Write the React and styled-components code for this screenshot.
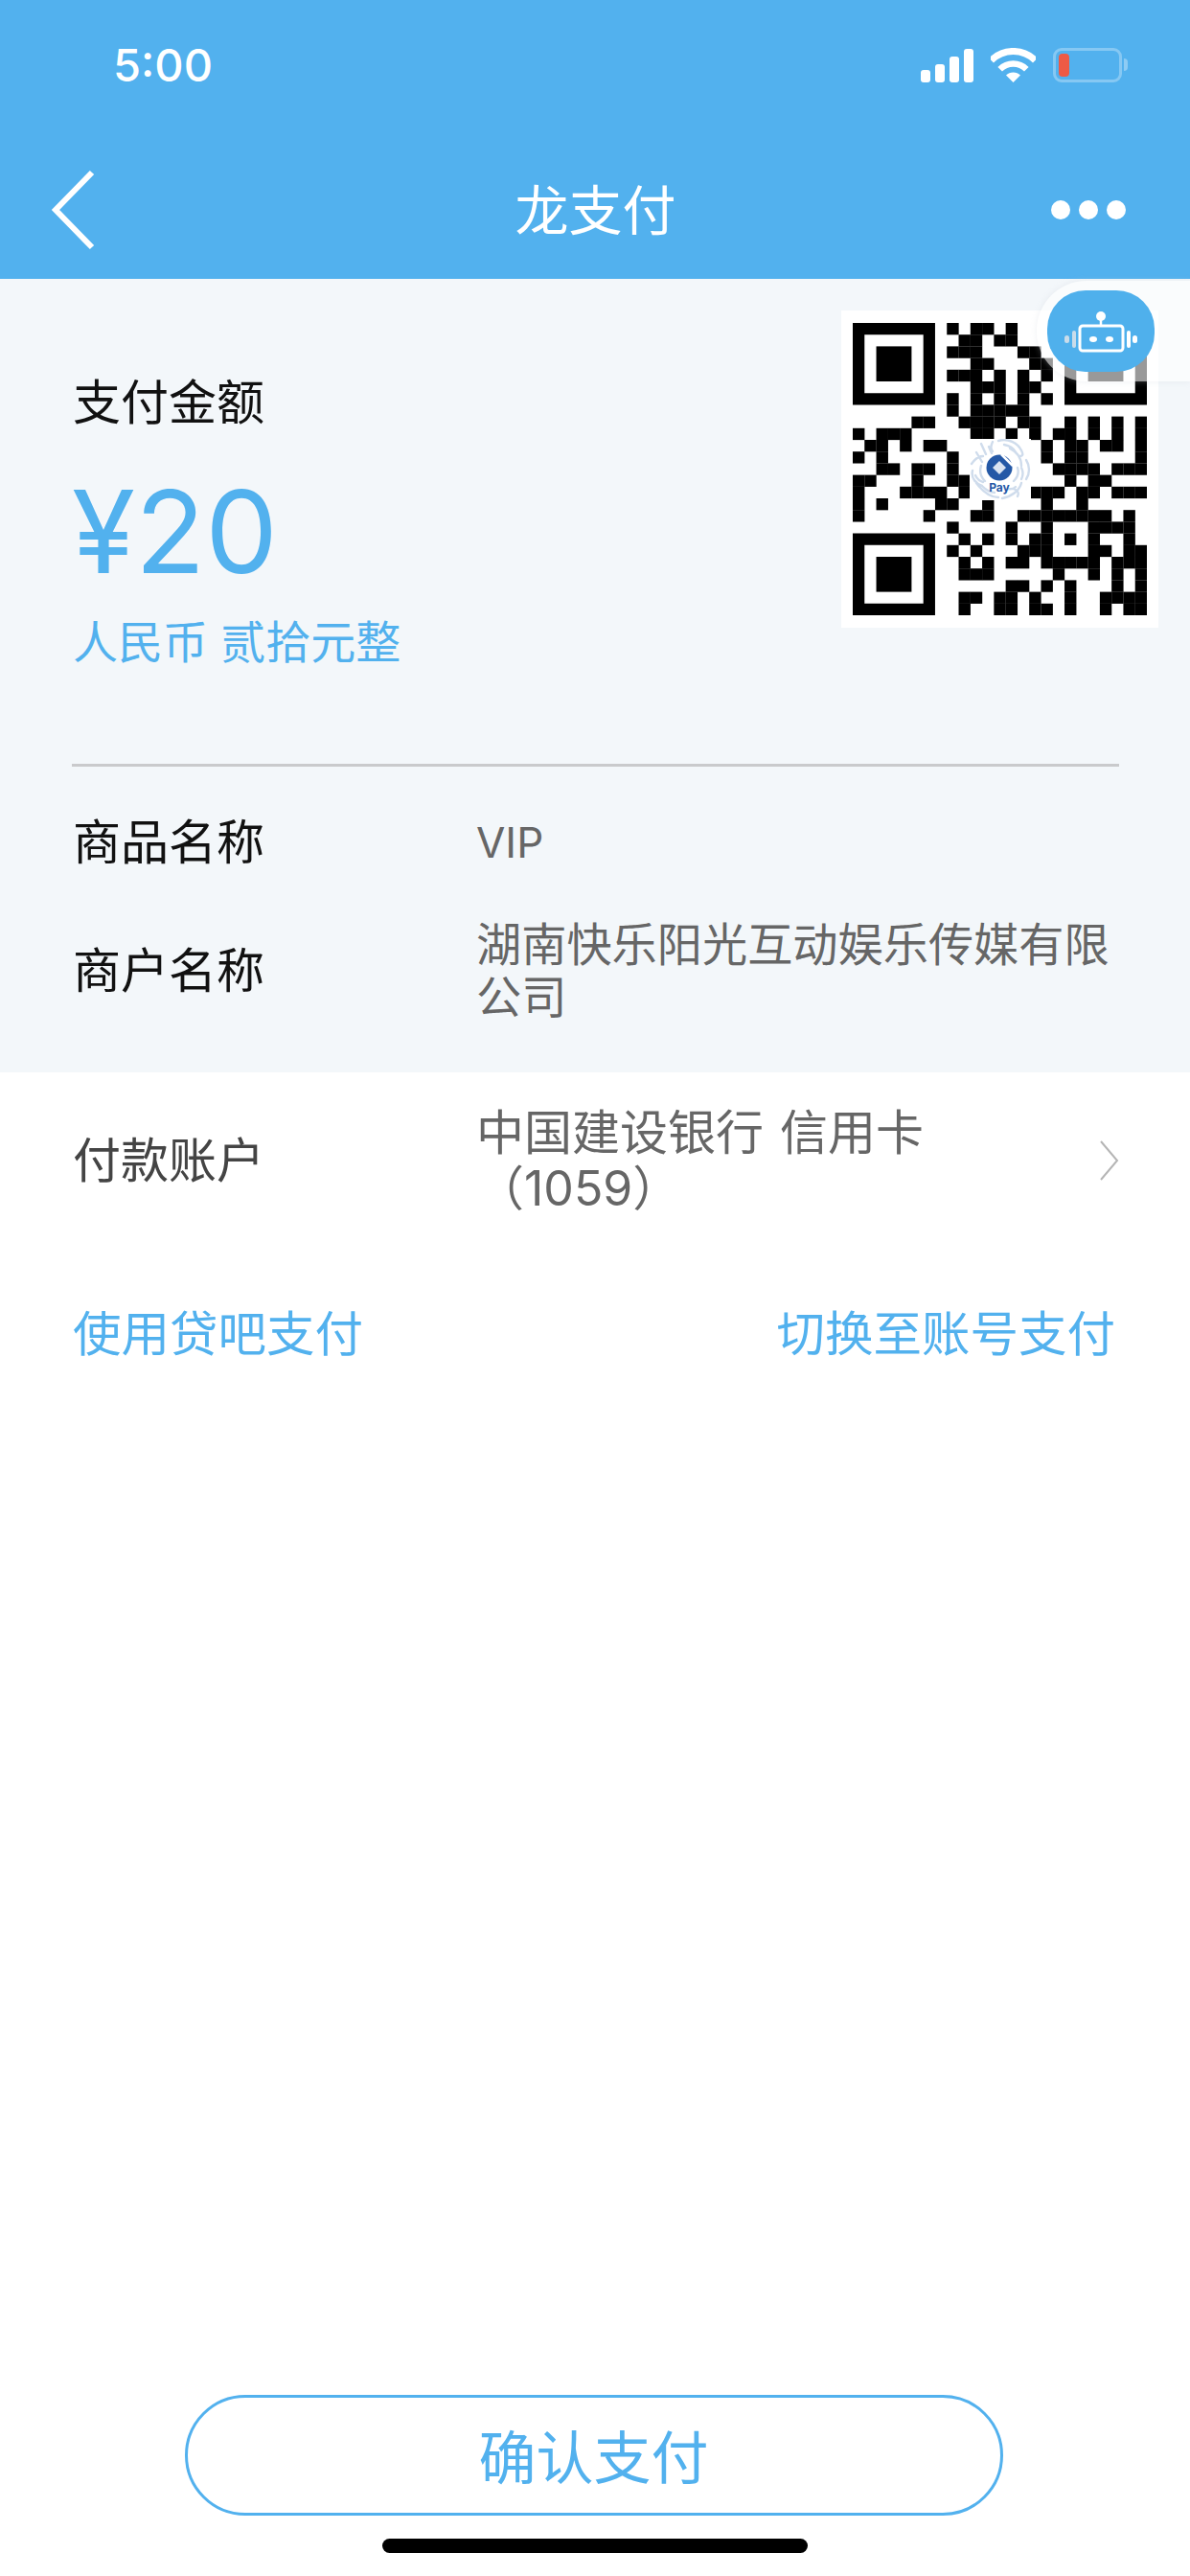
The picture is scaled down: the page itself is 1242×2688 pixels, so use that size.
import styled, { createGlobalStyle } from 'styled-components'

const GlobalStyle = createGlobalStyle`
  html, body {
    margin: 0;
    padding: 0;
    background: #fff;
  }
  * {
    box-sizing: border-box;
  }
`

const BLUE = '#52b1ee'

const Page = styled.div`
  position: relative;
  width: 1242px;
  height: 2688px;
  overflow: hidden;
  display: flex;
  flex-direction: column;
  background: #fff;
  font-family: Inter, "Noto Sans CJK SC", sans-serif;
`
const Header = styled.header`
  height: 291px;
  background: ${BLUE};
  color: #fff;
`
const StatusBar = styled.div`
  height: 136px;
  padding: 0 71px 0 118px;
  display: flex;
  align-items: center;
  justify-content: space-between;
`
const Time = styled.span`
  margin-bottom: 2px;
  font-size: 47px;
  font-weight: 500;
`
const StatusIcons = styled.div`
  display: flex;
  align-items: flex-end;
  gap: 18px;
`
const Signal = styled.div`
  display: flex;
  align-items: flex-end;
  gap: 5px;
`
const SignalBar = styled.i`
  display: block;
  width: 10px;
  height: ${p => p.$h}px;
  border-radius: 3px;
  background: #fff;
`
const Battery = styled.div`
  position: relative;
  width: 72px;
  height: 36px;
  padding: 3px;
  border: 3px solid rgba(255, 255, 255, 0.3);
  border-radius: 9px;
  &::after {
    content: '';
    position: absolute;
    right: -9px;
    top: 8px;
    width: 4px;
    height: 13px;
    border-radius: 0 4px 4px 0;
    background: rgba(255, 255, 255, 0.35);
  }
`
const BatteryLevel = styled.div`
  width: 11px;
  height: 100%;
  border-radius: 4px;
  background: #ee5a45;
`
const NavBar = styled.nav`
  height: 145px;
  margin-top: 10px;
  padding: 0 67px 0 52px;
  display: grid;
  grid-template-columns: 1fr auto 1fr;
  align-items: center;
`
const Title = styled.h1`
  margin: 0;
  padding: 2px 0 0 16px;
  font-size: 56px;
  font-weight: 400;
  line-height: 70px;
`
const Dots = styled.div`
  display: flex;
  gap: 9px;
  justify-content: flex-end;
`
const Dot = styled.i`
  display: block;
  width: 20px;
  height: 20px;
  border-radius: 50%;
  background: #fff;
`
const Summary = styled.section`
  background: #f3f7fa;
  padding: 33px 0 51px 75px;
`
const AmountRow = styled.div`
  display: flex;
  justify-content: space-between;
  align-items: flex-start;
  height: 476px;
  border-bottom: 3px solid #c9cacc;
  margin-right: 74px;
`
const AmountText = styled.div`
  padding: 66px 0 0 1px;
`
const AmountLabel = styled.div`
  font-size: 50px;
  line-height: 60px;
  color: #111;
`
const Amount = styled.div`
  margin: 40px 0 0 -1px;
  font-size: 120px;
  line-height: 130px;
  color: ${BLUE};
`
const AmountWords = styled.div`
  margin-top: 20px;
  font-size: 47px;
  line-height: 60px;
  color: ${BLUE};
`
const QrBox = styled.div`
  position: relative;
  flex: none;
  width: 331px;
  height: 331px;
  margin-right: -41px;
  padding: 13px 12px;
  background: #fff;
`
const QrImage = styled.svg`
  display: block;
  filter: blur(0.5px);
`
const QrLogo = styled.svg`
  position: absolute;
  left: 134px;
  top: 134px;
`
const InfoRow = styled.div`
  display: flex;
  align-items: center;
  margin-top: ${p => p.$top}px;
  padding-left: 1px;
`
const Label = styled.div`
  flex: none;
  width: 421px;
  font-size: 50px;
  line-height: 60px;
  color: ${p => p.$soft ? '#444' : '#111'};
`
const Value = styled.div`
  font-size: ${p => p.$size}px;
  line-height: ${p => p.$line}px;
  word-spacing: 3px;
  color: #666;
  max-width: ${p => p.$max}px;
`
const Chevron = styled.svg`
  margin-left: auto;
`
const PaySection = styled.section`
  flex: 1;
  display: flex;
  flex-direction: column;
  padding: 34px 74px 0 75px;
`
const Links = styled.div`
  margin-top: 93px;
  display: flex;
  justify-content: space-between;
  padding: 0 4px 0 1px;
`
const TextLink = styled.a`
  font-size: 50.5px;
  line-height: 60px;
  color: ${BLUE};
`
const Footer = styled.footer`
  display: flex;
  flex-direction: column;
  align-items: center;
  padding-bottom: 24px;
`
const ConfirmButton = styled.button`
  width: 854px;
  height: 126px;
  margin-right: 3px;
  padding: 0 0 4px;
  border: 3px solid ${BLUE};
  border-radius: 63px;
  background: #fff;
  color: ${BLUE};
  font-family: inherit;
  font-size: 60px;
`
const HomeBar = styled.div`
  width: 444px;
  height: 15px;
  margin-top: 24px;
  border-radius: 8px;
  background: #000;
`
const FloatPanel = styled.div`
  position: absolute;
  top: 293px;
  left: 1082px;
  right: 0;
  height: 105px;
  padding: 10px 11px;
  border-radius: 52px 0 0 52px;
  background: rgba(255, 255, 255, 0.6);
  box-shadow: 0 0 6px rgba(200, 205, 215, 0.3);
`
const Bot = styled.div`
  width: 112px;
  height: 85px;
  border-radius: 40px;
  background: #4fb0ec;
  display: flex;
  align-items: center;
  justify-content: center;
`

// dark modules per row, finder patterns are added below
const rows = [
  [8, 10, 11, 13],
  [9, 10, 12, 13],
  [8, 9, 10, 14, 15],
  [10, 11, 15, 16],
  [8, 9, 10, 12, 14, 16],
  [10, 11, 12, 14, 15],
  [8, 10, 12, 14, 16],
  [8, 10, 11, 12, 13, 14],
  [5, 6, 9, 10, 11, 12, 14, 15, 18, 20, 22, 24],
  [0, 2, 3, 4, 10, 11, 13, 15, 17, 18, 20, 22, 24],
  [1, 2, 4, 6, 7, 16, 18, 19, 21, 22, 24],
  [0, 2, 8, 16, 18, 19, 24],
  [2, 3, 5, 6, 8, 17, 18, 19, 20, 22, 23, 24],
  [0, 1, 5, 8, 9, 18, 20, 21],
  [0, 4, 5, 6, 7, 9, 15, 16, 17, 19, 20, 22, 23, 24],
  [0, 2, 7, 8, 11, 16, 19],
  [0, 6, 10, 11, 14, 15, 16, 17, 18, 19, 20, 21, 23],
  [8, 13, 16, 20, 21, 22, 23],
  [9, 11, 13, 15, 16, 18, 20, 23],
  [8, 10, 14, 15, 16, 20, 21, 23, 24],
  [9, 11, 13, 14, 16, 17, 18, 19, 20, 22, 23, 24],
  [9, 10, 11, 17, 20, 22, 24],
  [13, 14, 16, 18, 22, 24],
  [9, 10, 12, 13, 15, 18, 21, 22, 23, 24],
  [9, 12, 13, 15, 16, 18, 21, 23, 24],
]

function Finder({ x, y }) {
  return (
    <g>
      <path fillRule="evenodd" d={`M${x} ${y}h7v7h-7zM${x + 1} ${y + 1}v5h5v-5z`} />
      <rect x={x + 2} y={y + 2} width="3" height="3" />
    </g>
  )
}

function QrCode() {
  return (
    <QrImage width="307" height="305" viewBox="0 0 25 25" preserveAspectRatio="none" fill="#000">
      <Finder x={0} y={0} />
      <Finder x={18} y={0} />
      <Finder x={0} y={18} />
      {rows.map((cols, r) =>
        cols.map(c => <rect key={`${r}-${c}`} x={c} y={r} width="1.01" height="1.01" />)
      )}
    </QrImage>
  )
}

function PayLogo() {
  return (
    <QrLogo width="64" height="64" viewBox="0 0 64 64">
      <rect width="64" height="64" fill="#fff" />
      <g fill="none" stroke="#cfdcec" strokeWidth="2.4" strokeLinecap="round">
        <path d="M2 26c4-6 8-8 12-8M7 14l6 10M12 5l5 11M20 8l3 7M24 3c-2 4-2 8 0 10" />
        <path d="M30 2c10-3 20 2 24 10 2 4 2 6-2 6M36 6c6 1 10 4 12 8" />
        <path d="M42 10c8 4 12 10 12 18M59 22c4 6 4 14 0 20M54 30c2 4 2 8 0 12" />
        <path d="M3 33c-2 8 4 14 10 16M7 46c6 8 14 15 23 15M6 38c2 4 4 6 8 7" />
        <path d="M54 46c-2 8-10 14-20 16M46 52c4 2 6 4 4 8M40 52c4 1 6 0 8-2" />
        <path d="M12 28c-2 6 0 12 4 16M50 30c2 6 0 10-4 14M14 50c4 4 8 6 12 6" />
      </g>
      <circle cx="31" cy="30" r="13.5" fill="#2458a6" />
      <path d="M33 16l12 12" stroke="#fff" strokeWidth="2.5" />
      <path d="M31 23l7 7-7 7-7-7z" fill="#d9e3f1" />
      <text x="31" y="55" textAnchor="middle" fontFamily="Inter, sans-serif" fontSize="12" fontWeight="700" fill="#2458a6">Pay</text>
    </QrLogo>
  )
}

function BotIcon() {
  return (
    <svg width="76" height="44" viewBox="0 0 76 44" fill="none">
      <circle cx="38" cy="6" r="5" fill="#fff" />
      <path d="M38 10v6" stroke="#fff" strokeWidth="2.5" />
      <rect x="16" y="16" width="45" height="26" rx="3" stroke="#fff" strokeWidth="3" />
      <ellipse cx="30" cy="30" rx="4" ry="3" fill="#fff" />
      <ellipse cx="47" cy="30" rx="4" ry="3" fill="#fff" />
      <rect x="0" y="26" width="5" height="8" rx="2.5" fill="#c9dcea" />
      <rect x="8" y="21" width="4" height="18" rx="2" fill="#c9dcea" />
      <rect x="65" y="21" width="4" height="18" rx="2" fill="#fff" />
      <rect x="71" y="26" width="5" height="8" rx="2.5" fill="#fff" />
    </svg>
  )
}

export default function App() {
  return (
    <Page>
      <GlobalStyle />
      <Header>
        <StatusBar>
          <Time>5:00</Time>
          <StatusIcons>
            <Signal>
              <SignalBar $h={13} />
              <SignalBar $h={19} />
              <SignalBar $h={27} />
              <SignalBar $h={35} />
            </Signal>
            <svg width="47" height="36" viewBox="0 0 47 36" fill="none" stroke="#fff">
              <path d="M.5 13a32.5 32.5 0 0 1 46 0" strokeWidth="7" />
              <path d="M9.7 22.2a19.5 19.5 0 0 1 27.6 0" strokeWidth="6.5" />
              <path d="M23.5 36l-7.5-7.5a10.6 10.6 0 0 1 15 0z" fill="#fff" stroke="none" />
            </svg>
            <Battery>
              <BatteryLevel />
            </Battery>
          </StatusIcons>
        </StatusBar>
        <NavBar>
          <svg width="50" height="86" viewBox="0 0 50 86" fill="none" stroke="#fff" strokeWidth="6">
            <path d="M44 4L6 43l38 39" />
          </svg>
          <Title>龙支付</Title>
          <Dots>
            <Dot />
            <Dot />
            <Dot />
          </Dots>
        </NavBar>
      </Header>

      <Summary>
        <AmountRow>
          <AmountText>
            <AmountLabel>支付金额</AmountLabel>
            <Amount>¥20</Amount>
            <AmountWords>人民币 贰拾元整</AmountWords>
          </AmountText>
          <QrBox>
            <QrCode />
            <PayLogo />
          </QrBox>
        </AmountRow>
        <InfoRow $top={49}>
          <Label>商品名称</Label>
          <Value $size={44} $line={55} $max={680}>VIP</Value>
        </InfoRow>
        <InfoRow $top={49}>
          <Label>商户名称</Label>
          <Value $size={47.2} $line={55} $max={680}>湖南快乐阳光互动娱乐传媒有限公司</Value>
        </InfoRow>
      </Summary>

      <PaySection>
        <InfoRow $top={0}>
          <Label $soft>付款账户</Label>
          <Value $size={50} $line={58} $max={560}>中国建设银行 信用卡（1059）</Value>
          <Chevron width="21" height="42" viewBox="0 0 21 42" fill="none" stroke="#b5b5b5" strokeWidth="2">
            <path d="M2 1l17 20L2 41" />
          </Chevron>
        </InfoRow>
        <Links>
          <TextLink>使用贷吧支付</TextLink>
          <TextLink>切换至账号支付</TextLink>
        </Links>
      </PaySection>

      <Footer>
        <ConfirmButton>确认支付</ConfirmButton>
        <HomeBar />
      </Footer>

      <FloatPanel>
        <Bot>
          <BotIcon />
        </Bot>
      </FloatPanel>
    </Page>
  )
}
